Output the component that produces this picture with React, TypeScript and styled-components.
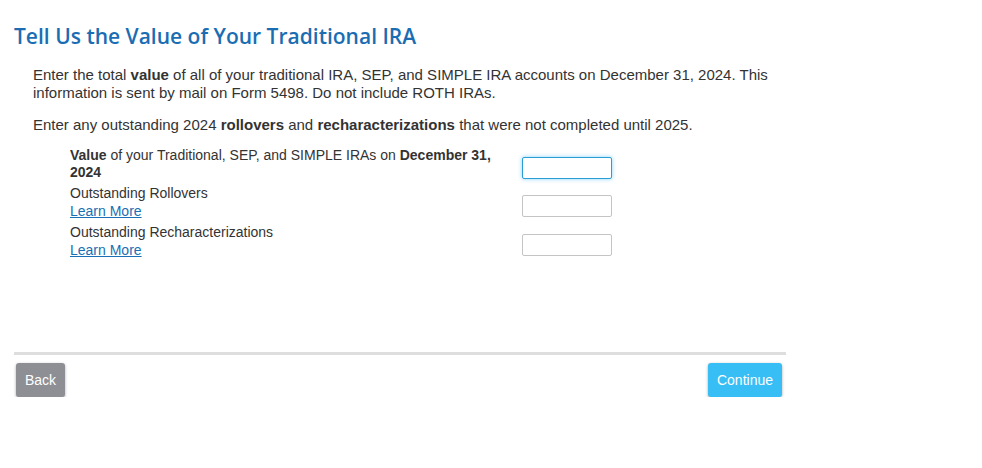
import { createGlobalStyle } from "styled-components"
import styled from "styled-components"

const GlobalStyle = createGlobalStyle`
  body {
    margin: 0;
    background: #fff;
    font-family: "Liberation Sans", Arial, sans-serif;
    color: #333;
  }
`

function App() {
  return (
    <>
      <GlobalStyle />
      <Page>
        <Title>Tell Us the Value of Your Traditional IRA</Title>
        <Body>
          <Para>
            Enter the total <b>value</b> of all of your traditional IRA, SEP, and SIMPLE IRA
            accounts on December 31, 2024. This information is sent by mail on Form 5498. Do not
            include ROTH IRAs.
          </Para>
          <Para>
            Enter any outstanding 2024 <b>rollovers</b> and <b>recharacterizations</b> that were
            not completed until 2025.
          </Para>
          <Form>
            <Row>
              <Label>
                <b>Value</b> of your Traditional, SEP, and SIMPLE IRAs on <b>December 31, 2024</b>
              </Label>
              <Field $focused autoFocus />
            </Row>
            <Row>
              <Label>
                Outstanding Rollovers
                <br />
                <LearnMore href="#">Learn More</LearnMore>
              </Label>
              <Field />
            </Row>
            <Row>
              <Label>
                Outstanding Recharacterizations
                <br />
                <LearnMore href="#">Learn More</LearnMore>
              </Label>
              <Field />
            </Row>
          </Form>
        </Body>
        <Footer>
          <Button $variant="back">Back</Button>
          <Button $variant="primary">Continue</Button>
        </Footer>
      </Page>
    </>
  )
}

export default App

const Page = styled.div`
  width: 772px;
  padding: 22px 0 0 14px;
`

const Title = styled.h1`
  margin: 0;
  font-family: "Open Sans", "Liberation Sans", sans-serif;
  font-weight: 600;
  font-size: 21px;
  line-height: 28px;
  color: #1b6db3;
`

const Body = styled.div`
  padding: 16px 0 0 19px;
  height: 286px;
`

const Para = styled.p`
  margin: 0 0 14px;
  font-size: 15px;
  line-height: 18px;

  &:last-of-type {
    margin-bottom: 0;
  }
`

const Form = styled.div`
  display: flex;
  flex-direction: column;
  gap: 4px;
  padding: 13px 0 0 37px;
`

const Row = styled.div`
  display: flex;
  align-items: flex-start;
  gap: 21px;
  min-height: 34px;
`

const Label = styled.div`
  width: 431px;
  font-size: 14px;
  line-height: 17px;
`

const LearnMore = styled.a`
  display: inline-block;
  margin-top: 1px;
  color: #1a6fb5;
  text-decoration: underline;
`

const Field = styled.input<{ $focused?: boolean }>`
  box-sizing: border-box;
  width: 90px;
  height: 22px;
  margin-top: 10px;
  border: 1px solid ${(p) => (p.$focused ? "#2a9fd6" : "#c4c4c4")};
  border-radius: 2px;
  outline: none;
  box-shadow: ${(p) => (p.$focused ? "0 0 4px rgba(60, 180, 240, 0.6)" : "none")};
  font-size: 14px;
  padding: 0 4px;
`

const Footer = styled.div`
  display: flex;
  justify-content: space-between;
  align-items: center;
  border-top: 3px solid #dedede;
  padding: 8px 4px 0 2px;
`

const Button = styled.button<{ $variant: "back" | "primary" }>`
  height: 34px;
  padding: 0 9px;
  border: none;
  border-radius: 3px;
  font-family: "Liberation Sans", Arial, sans-serif;
  font-size: 14px;
  color: #fff;
  background: ${(p) => (p.$variant === "back" ? "#8e8f94" : "#36bef5")};
  box-shadow: 0 1px 3px rgba(0, 0, 0, 0.35);
  cursor: pointer;
`
